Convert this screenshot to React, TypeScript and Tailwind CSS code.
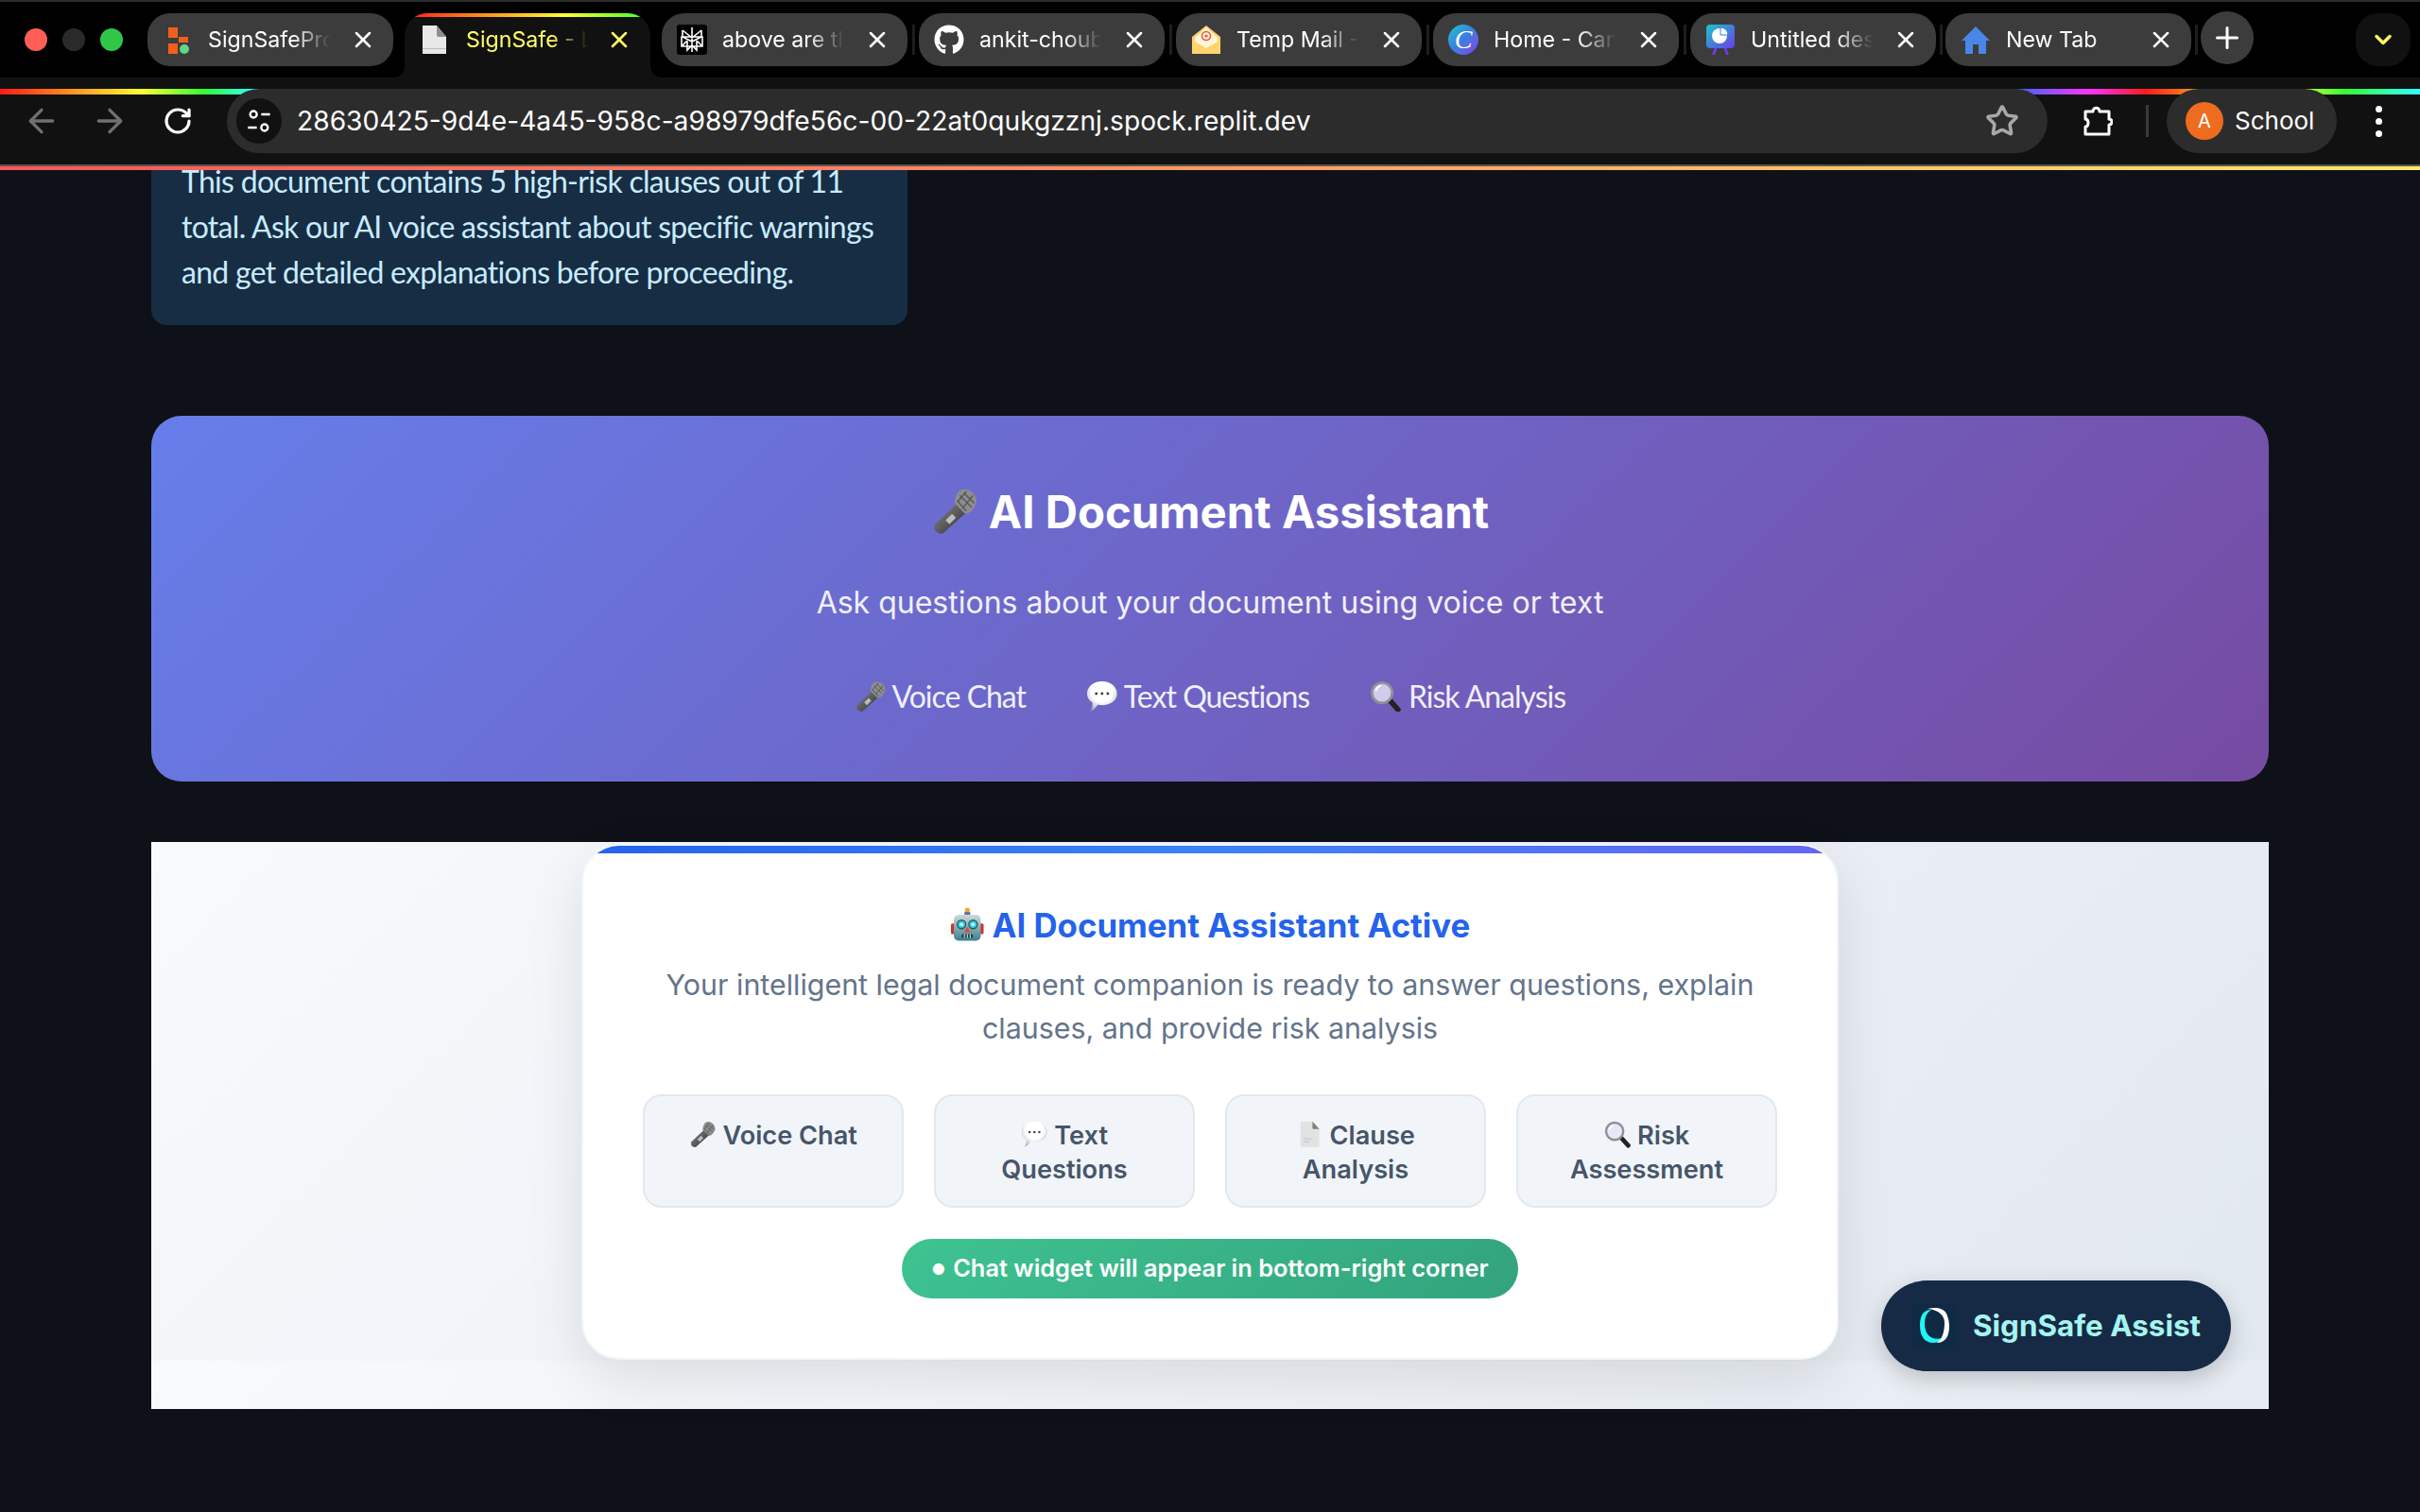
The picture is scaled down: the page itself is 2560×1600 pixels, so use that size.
import React from "react";
import { ArrowLeft, ArrowRight, RotateCw, Star, X, Plus, ChevronDown } from "lucide-react";
import { FaGithub } from "react-icons/fa";

const MicEmoji = () => (
  <svg viewBox="0 0 36 36" className="inline-block w-[1.05em] h-[1.05em] align-[-0.14em]">
    <defs>
      <linearGradient id="micBody" x1="0" y1="0" x2="1" y2="1">
        <stop offset="0" stopColor="#8b8b8b" />
        <stop offset="1" stopColor="#2b2b2b" />
      </linearGradient>
    </defs>
    <path d="M20 12 L27 19 L9 35 Q6 36 3 33 Q2 31 3 28 Z" fill="url(#micBody)" />
    <path d="M16 20 L19 23 L14 28 L11 25 Z" fill="#bdbdbd" />
    <path d="M21 3 Q26 -1 32 4 Q37 10 33 15 Q30 20 26 20 L18 12 Q18 7 21 3 Z" fill="#8d8d8d" />
    <path d="M22 6 L31 15 M25 4 L33 12 M20 10 L27 18 M27 3 L20 11 M32 6 L24 16" stroke="#565656" strokeWidth="1" />
  </svg>
);

const BubbleEmoji = () => (
  <svg viewBox="0 0 36 36" className="inline-block w-[1.05em] h-[1.05em] align-[-0.14em]">
    <defs>
      <radialGradient id="bubbleFill" cx="0.5" cy="0.35" r="0.72">
        <stop offset="0.5" stopColor="#ffffff" />
        <stop offset="1" stopColor="#9c9cae" />
      </radialGradient>
    </defs>
    <path d="M18 1 C28 1 35 7 35 15 C35 23 28 28 18 28 Q15 28 13 27.5 Q10 33 5 35 Q8 30 7 25 C3 23 1 19 1 15 C1 7 8 1 18 1 Z" fill="url(#bubbleFill)" />
    <circle cx="11.5" cy="15" r="1.6" fill="#444" />
    <circle cx="18" cy="15" r="1.6" fill="#444" />
    <circle cx="24.5" cy="15" r="1.6" fill="#444" />
  </svg>
);

const LensEmoji = () => (
  <svg viewBox="0 0 36 36" className="inline-block w-[1.05em] h-[1.05em] align-[-0.14em]">
    <path d="M23 23 L32 33" stroke="#222" strokeWidth="6" strokeLinecap="round" />
    <circle cx="14" cy="14" r="11.5" fill="#e7e4f6" fillOpacity="0.82" stroke="#8f8f98" strokeWidth="3" />
    <path d="M7 12 Q8 7 13 6" stroke="#fff" strokeWidth="2" fill="none" />
  </svg>
);

const DocEmoji = () => (
  <svg viewBox="0 0 36 36" className="inline-block w-[1.05em] h-[1.05em] align-[-0.14em]">
    <path d="M6 1 H22 L31 11 V35 H6 Z" fill="#e2e2e2" />
    <path d="M22 1 L31 11 H23 Q22 11 22 9 Z" fill="#7e7e7e" />
    <path d="M10 24 H22 M10 28 H18" stroke="#c8c8c8" strokeWidth="1.5" />
  </svg>
);

const RobotEmoji = () => (
  <svg viewBox="0 0 36 36" className="inline-block w-[1.05em] h-[1.05em] align-[-0.14em]">
    <defs>
      <linearGradient id="robotHead" x1="0" y1="0" x2="0" y2="1">
        <stop offset="0" stopColor="#c9dcd9" />
        <stop offset="1" stopColor="#3f7f8c" />
      </linearGradient>
    </defs>
    <circle cx="18" cy="3" r="2.6" fill="#f0a63c" />
    <rect x="15" y="5" width="6" height="4" fill="#6c6a9c" />
    <rect x="1" y="17" width="4" height="11" rx="1.5" fill="#c8342f" />
    <rect x="31" y="17" width="4" height="11" rx="1.5" fill="#c8342f" />
    <rect x="4" y="8" width="28" height="27" rx="5" fill="url(#robotHead)" />
    <circle cx="12" cy="18" r="4.4" fill="#2ad0e6" stroke="#3b5560" strokeWidth="1.4" />
    <circle cx="24" cy="18" r="4.4" fill="#2ad0e6" stroke="#3b5560" strokeWidth="1.4" />
    <circle cx="12" cy="18" r="1.8" fill="#dff" />
    <circle cx="24" cy="18" r="1.8" fill="#dff" />
    <path d="M18 20 L21 26 H15 Z" fill="#e2463f" />
    <rect x="12" y="28" width="12" height="4" rx="1.5" fill="#26414a" />
    <path d="M15 28 V32 M18 28 V32 M21 28 V32" stroke="#cfe" strokeWidth="1" />
  </svg>
);

const favicons = {
  sign: (
    <svg viewBox="0 0 32 32" className="w-8 h-8">
      <rect x="6" y="3" width="10" height="11" fill="#f0601c" />
      <rect x="17" y="13" width="10" height="6" fill="#f0601c" />
      <rect x="6" y="20" width="10" height="11" fill="#f0601c" />
      <circle cx="23" cy="26" r="5" fill="#5fd68a" />
    </svg>
  ),
  doc: (
    <svg viewBox="0 0 32 32" className="w-8 h-8">
      <path d="M4 1 H19 L29 13 V31 H4 Z" fill="#e8e8e8" />
      <path d="M19 1 L29 13 H21 Q19 13 19 11 Z" fill="#8f8f8f" />
      <path d="M4 25 H29 V26 H4 Z" fill="#bdbdbd" />
    </svg>
  ),
  perplexity: (
    <svg viewBox="0 0 32 32" className="w-8 h-8">
      <rect width="32" height="32" rx="3" fill="#000" />
      <path d="M16 3 V29 M6 6 L16 14 L26 6 M6 6 V13 L16 18 L26 13 V6 M5 13 H27 V23 H5 Z M5 23 L11 17 V27 L16 22 L21 27 V17 L27 23" stroke="#fff" strokeWidth="1.6" fill="none" />
    </svg>
  ),
  github: <FaGithub className="w-8 h-8 text-white" />,
  mail: (
    <svg viewBox="0 0 32 32" className="w-8 h-8">
      <path d="M1 13 L16 1 L31 13 V31 H1 Z" fill="#ffd46c" />
      <path d="M4 14 L16 3 L28 14 V18 L16 25 L4 18 Z" fill="#fff5da" />
      <circle cx="16" cy="12" r="4.5" fill="none" stroke="#e8573f" strokeWidth="1.6" />
      <circle cx="16" cy="12" r="1.6" fill="#e8573f" />
    </svg>
  ),
  canva: (
    <span className="flex w-8 h-8 items-center justify-center rounded-full bg-gradient-to-br from-[#1fc4c9] via-[#3a7de0] to-[#7a34e8] font-['Liberation_Serif',serif] italic text-[28px] leading-none text-white">
      C
    </span>
  ),
  slides: (
    <svg viewBox="0 0 32 32" className="w-8 h-8">
      <defs>
        <linearGradient id="slidesFill" x1="0" y1="0" x2="1" y2="1">
          <stop offset="0" stopColor="#18c7c7" />
          <stop offset="1" stopColor="#6d3bea" />
        </linearGradient>
      </defs>
      <path d="M10 24 L7 32 H10 L13 24 M22 24 L25 32 H22 L19 24" fill="#6d3bea" />
      <rect x="1" y="0" width="30" height="25" rx="4" fill="url(#slidesFill)" />
      <circle cx="15" cy="12" r="8" fill="#fff" />
      <path d="M16 3 A8 8 0 0 1 24 11 H16 Z" fill="#fff" stroke="#2b8bd8" strokeWidth="1" />
    </svg>
  ),
  home: (
    <svg viewBox="0 0 32 32" className="w-8 h-8">
      <path d="M16 2 L31 17 H27 V31 H19 V21 H13 V31 H5 V17 H1 Z" fill="#4a86e8" />
    </svg>
  ),
};

const tabs = [
  { title: "SignSafeProject", icon: favicons.sign },
  { title: "SignSafe - Legal", icon: favicons.doc, active: true },
  { title: "above are the", icon: favicons.perplexity },
  { title: "ankit-choubey", icon: favicons.github },
  { title: "Temp Mail - Disp", icon: favicons.mail },
  { title: "Home - Canva", icon: favicons.canva },
  { title: "Untitled design", icon: favicons.slides },
  { title: "New Tab", icon: favicons.home },
];

const TabSep = () => (
  <div className="w-3 h-14 flex items-center justify-center">
    <div className="w-[3px] h-8 bg-[#1e1e1e]" />
  </div>
);

const Tab = ({ title, icon, active }: { title: string; icon: React.ReactNode; active?: boolean }) => {
  if (active) {
    return (
      <div className="relative w-[260px] h-[68px]">
        <div className="absolute bottom-0 -left-3 w-3 h-3 bg-[#111111]">
          <div className="w-3 h-3 bg-black rounded-br-xl" />
        </div>
        <div className="absolute bottom-0 -right-3 w-3 h-3 bg-[#111111]">
          <div className="w-3 h-3 bg-black rounded-bl-xl" />
        </div>
        <div className="relative h-full rounded-t-3xl bg-[#111111] overflow-hidden flex items-start pt-3 pl-[15px]">
          <div className="absolute top-0 inset-x-0 h-1 bg-[linear-gradient(90deg,#ff1a1a_0%,#ff8a1f_30%,#ffff33_65%,#33ff33_100%)]" />
          <div className="shrink-0">{icon}</div>
          <span className="ml-[18px] w-[132px] overflow-hidden whitespace-nowrap text-[23.2px] leading-8 text-[#ffff66] [mask-image:linear-gradient(90deg,#000_68%,transparent_98%)]">
            {title}
          </span>
          <X className="w-7 h-7 mt-0.5 ml-4 text-[#ffff66]" strokeWidth={2.2} />
        </div>
      </div>
    );
  }
  return (
    <div className="w-[260px] h-14 rounded-3xl bg-[#3c3c3c] flex items-center pl-4">
      <div className="shrink-0">{icon}</div>
      <span className="ml-4 w-[132px] overflow-hidden whitespace-nowrap text-[23.2px] leading-8 text-white [mask-image:linear-gradient(90deg,#000_68%,transparent_98%)]">
        {title}
      </span>
      <X className="w-7 h-7 ml-[18px] text-white" strokeWidth={2.2} />
    </div>
  );
};

const features = [
  { icon: <MicEmoji />, label: "Voice Chat" },
  { icon: <BubbleEmoji />, label: "Text Questions" },
  { icon: <DocEmoji />, label: "Clause Analysis" },
  { icon: <LensEmoji />, label: "Risk Assessment" },
];

export default function App() {
  return (
    <div className="w-[2560px] h-[1600px] overflow-hidden flex flex-col bg-[#0e1117] font-['Inter',sans-serif]">
      {/* browser chrome */}
      <header className="shrink-0">
        <div className="h-[2px] bg-[#2d2d2d]" />
        <div className="h-20 bg-black flex items-start pt-3">
          <div className="flex items-center gap-4 pl-[26px] pr-[26px] h-14">
            <span className="w-6 h-6 rounded-full bg-[#ff5f57]" />
            <span className="w-6 h-6 rounded-full bg-[#2a2a2a]" />
            <span className="w-6 h-6 rounded-full bg-[#30c748]" />
          </div>
          <Tab {...tabs[0]} />
          <div className="w-3" />
          <Tab {...tabs[1]} />
          <div className="w-3" />
          <Tab {...tabs[2]} />
          <TabSep />
          <Tab {...tabs[3]} />
          <TabSep />
          <Tab {...tabs[4]} />
          <TabSep />
          <Tab {...tabs[5]} />
          <TabSep />
          <Tab {...tabs[6]} />
          <div className="w-[10px] h-14 flex items-center justify-center">
            <div className="w-[3px] h-8 bg-[#1e1e1e]" />
          </div>
          <Tab {...tabs[7]} />
          <div className="w-[10px] h-14 flex items-center justify-center">
            <div className="w-[3px] h-8 bg-[#1e1e1e]" />
          </div>
          <div className="w-14 h-14 -mt-0.5 rounded-full bg-[#3c3c3c] flex items-center justify-center">
            <Plus className="w-9 h-9 text-white" strokeWidth={2} />
          </div>
          <div className="ml-[108px] w-[58px] h-14 rounded-3xl bg-[#111111] flex items-center justify-center">
            <ChevronDown className="w-7 h-7 text-[#ffff66]" strokeWidth={3} />
          </div>
        </div>

        <div className="relative h-[92px] bg-[#111111] flex items-start pt-3 pl-6">
          <div className="absolute top-3 inset-x-0 h-[6px] bg-[linear-gradient(90deg,#ff1a1a_0px,#ff8a1f_70px,#ffff33_150px,#33ff33_215px,#33ffff_270px,#3366ff_2130px,#ff33ff_2210px,#ff1a1a_2270px,#ff8a1f_2320px,#ffff33_2420px,#33ff33_2480px,#33ffff_2560px)]" />
          <div className="relative flex items-center h-[68px] w-full">
            <ArrowLeft className="w-10 h-10 text-[#707070]" strokeWidth={2} />
            <ArrowRight className="w-10 h-10 ml-8 text-[#707070]" strokeWidth={2} />
            <RotateCw className="w-8 h-8 ml-9 text-white" strokeWidth={2.4} />
            <div className="ml-9 w-[1926px] h-[68px] rounded-full bg-[#2c2c2c] flex items-center pl-[10px] pr-[30px]">
              <div className="w-12 h-12 rounded-full bg-[#111111] flex items-center justify-center">
                <svg viewBox="0 0 24 24" className="w-7 h-7" fill="none" stroke="#fff" strokeWidth="2">
                  <circle cx="7" cy="6" r="3" />
                  <path d="M14 6 H22 M2 18 H10" />
                  <circle cx="17" cy="18" r="3" />
                </svg>
              </div>
              <span className="ml-4 text-[28.2px] leading-none text-white">
                28630425-9d4e-4a45-958c-a98979dfe56c-00-22at0qukgzznj.spock.replit.dev
              </span>
              <Star className="ml-auto w-9 h-9 text-[#a8a8a8]" strokeWidth={2.4} />
            </div>
            <svg viewBox="0 0 32 32" className="ml-[37px] w-8 h-8" fill="none" stroke="#fff" strokeWidth="3" strokeLinejoin="round">
              <path d="M3 6 H11 C11 1 18 1 18 6 H28 V14 C32 14 32 20 28 20 V30 H3 V22 C7 22 7 14 3 14 Z" />
            </svg>
            <div className="ml-[35px] w-[3px] h-[34px] bg-[#3a3a3a]" />
            <div className="ml-[19px] w-[180px] h-[68px] rounded-full bg-[#2c2c2c] flex items-center pl-5">
              <span className="w-10 h-10 rounded-full bg-[#ee6c1f] flex items-center justify-center text-[20px] text-white">A</span>
              <span className="ml-3 text-[26px] leading-none text-white">School</span>
            </div>
            <div className="ml-[41px] flex flex-col gap-[6px]">
              <span className="w-[7px] h-[7px] rounded-full bg-white" />
              <span className="w-[7px] h-[7px] rounded-full bg-white" />
              <span className="w-[7px] h-[7px] rounded-full bg-white" />
            </div>
          </div>
        </div>
        <div className="h-[2px] bg-[#555555]" />
        <div className="h-1 bg-[linear-gradient(90deg,#ff5555_0%,#ff8060_35%,#ffb566_68%,#ffe76b_100%)]" />
      </header>

      {/* page */}
      <main className="flex-1 overflow-hidden px-40">
        <div className="-mt-11 w-[800px] rounded-2xl bg-[#172d43] pt-8 pb-8 pl-8 pr-4 font-['Lato',sans-serif] text-[32px] leading-[48px] tracking-[-0.7px] text-[#c7ebff]">
          This document contains 5 high-risk clauses out of 11 total. Ask our AI voice assistant about specific warnings and get detailed explanations before proceeding.
        </div>

        <section className="mt-24 h-[387px] rounded-[32px] bg-[linear-gradient(135deg,#667eea_0%,#764ba2_100%)] flex flex-col items-center text-white">
          <h1 className="mt-[72px] text-[47.4px] leading-[60px] font-bold">
            <MicEmoji /> AI Document Assistant
          </h1>
          <p className="mt-[46px] text-[32px] leading-10 text-white/90">Ask questions about your document using voice or text</p>
          <div className="mt-[59px] flex gap-16 font-['Lato',sans-serif] text-[32px] leading-10 tracking-[-1px] text-white/90">
            <span><MicEmoji /> Voice Chat</span>
            <span><BubbleEmoji /> Text Questions</span>
            <span><LensEmoji /> Risk Analysis</span>
          </div>
        </section>

        <section className="relative mt-16 h-[600px] pt-[2px] flex justify-center bg-[linear-gradient(135deg,#f8fafc_0%,#e2e8f0_100%)] bg-[length:100%_549px]">
          <div className="w-[1330px] h-[546px] rounded-[40px] bg-white border-2 border-[#f1f5f9] overflow-hidden shadow-[0_20px_60px_rgba(0,0,0,0.1)]">
            <div className="h-2 bg-[linear-gradient(90deg,#2563eb_0%,#3b82f6_50%,#6366f1_100%)]" />
            <div className="px-[62px] flex flex-col items-center">
              <h2 className="mt-[54px] text-[34.8px] leading-[44px] font-bold text-[#2563eb]">
                <RobotEmoji /> AI Document Assistant Active
              </h2>
              <p className="mt-[18px] w-[1200px] text-center text-[30.4px] leading-[46px] text-[#64748b]">
                Your intelligent legal document companion is ready to answer questions, explain clauses, and provide risk analysis
              </p>
              <div className="mt-[47px] grid grid-cols-4 gap-8 w-[1200px]">
                {features.map((f) => (
                  <div key={f.label} className="h-[120px] rounded-[20px] border-2 border-[#e2e8f0] bg-[#f1f5f9] px-6 pt-6 text-center text-[27.2px] leading-[36px] font-semibold text-[#475569]">
                    {f.icon} {f.label}
                  </div>
                ))}
              </div>
              <div className="mt-[33px] h-[63px] rounded-full px-8 flex items-center text-white text-[25.4px] font-semibold bg-[linear-gradient(135deg,#3ec391_0%,#33a37d_100%)]">
                <span className="text-[16px] mr-2">●</span>Chat widget will appear in bottom-right corner
              </div>
            </div>
          </div>

          <div className="absolute left-[1830px] top-[464px] w-[370px] h-24 rounded-full bg-[#172a45] flex items-center pl-[33px] shadow-[0_8px_24px_rgba(0,0,0,0.2)]">
            <svg viewBox="0 0 46 46" className="w-[46px] h-[46px]">
              <rect width="46" height="46" fill="#0f2a45" />
              <path d="M20 6 C12 6 8 12 8 22 C8 34 13 41 22 41 C28 41 32 38 35 34 C30 38 14 40 13 22 C13 12 16 9 20 6 Z" fill="#22f5f5" />
              <path d="M16 5 C24 3 33 4 36 10 C40 18 40 30 36 36 C33 40 29 41 26 41 C32 37 34 28 34 20 C34 12 28 6 16 5 Z" fill="#ffffff" />
            </svg>
            <span className="ml-[18px] text-[31.4px] leading-[50px] font-bold text-[#a5f5ef]">SignSafe Assist</span>
          </div>
        </section>
      </main>
    </div>
  );
}
